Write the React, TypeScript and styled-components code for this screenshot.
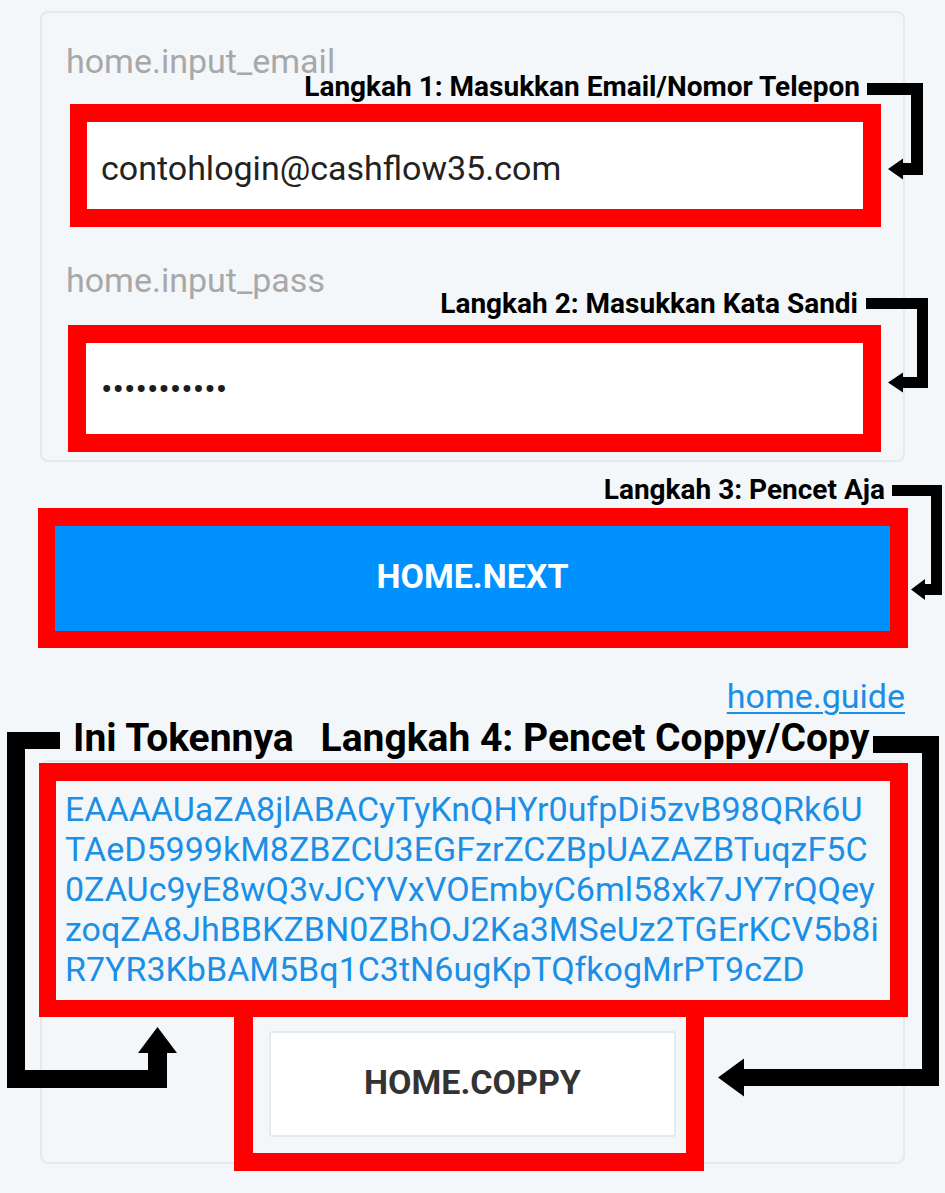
import React from "react";
import styled, { createGlobalStyle } from "styled-components";

const Global = createGlobalStyle`
  html, body { margin: 0; padding: 0; background: #f4f7fa; }
  body { font-family: Roboto, "Liberation Sans", sans-serif; }
  * { box-sizing: border-box; }
`;

const Page = styled.div`
  width: 945px;
  padding: 11px 40px 29px;
  display: flex;
  flex-direction: column;
`;

const Card = styled.section`
  border: 2px solid #e5e8ec;
  border-radius: 8px;
  background: transparent;
  display: flex;
  flex-direction: column;
`;

const FormCard = styled(Card)`
  padding: 28px 24px 8px;
`;

const FieldLabel = styled.div<{ $gapTop?: number }>`
  font-size: 34px;
  line-height: 40px;
  color: #a8a8a8;
  margin-top: ${(p) => p.$gapTop ?? 0}px;
`;

/* red annotation frame drawn around a control */
const RedFrame = styled.div<{ $m: string; $bw: string }>`
  position: relative;
  margin: ${(p) => p.$m};
  border-style: solid;
  border-color: #ff0000;
  border-width: ${(p) => p.$bw};
  display: flex;
  flex-direction: column;
`;

const InputBox = styled.div<{ $h: number; $pl: number; $pt?: number }>`
  height: ${(p) => p.$h}px;
  background: #ffffff;
  padding: ${(p) => p.$pt ?? 0}px 0 0 ${(p) => p.$pl}px;
  display: flex;
  align-items: center;
  font-size: 34px;
  color: #222222;
`;

const Dots = styled.span`
  font-size: 34px;
  color: #1d1d1d;
`;

/* callout = step text + bent arrow, laid over the form */
const Callout = styled.div<{ $top: number; $right: number }>`
  position: absolute;
  top: ${(p) => p.$top}px;
  right: ${(p) => p.$right}px;
  display: flex;
  align-items: flex-start;
  z-index: 2;
`;

const StepNote = styled.div<{ $size: number; $lh: number; $ml?: number }>`
  font-size: ${(p) => p.$size}px;
  line-height: ${(p) => p.$lh}px;
  font-weight: 700;
  color: #000000;
  white-space: nowrap;
  margin-left: ${(p) => p.$ml ?? 0}px;
`;

const ArrowSvg = styled.svg<{ $mt: number; $ml: number }>`
  display: block;
  flex: none;
  position: relative;
  z-index: 2;
  overflow: visible;
  margin-top: ${(p) => p.$mt}px;
  margin-left: ${(p) => p.$ml}px;
`;

const NextButton = styled.button`
  height: 105px;
  border: none;
  padding: 0 0 5px;
  background: #0091ff;
  color: #ffffff;
  font-family: Roboto, "Liberation Sans", sans-serif;
  font-size: 34px;
  font-weight: 700;
  text-transform: uppercase;
`;

const GuideRow = styled.div`
  margin-top: 28px;
  display: flex;
  justify-content: flex-end;
`;

const GuideLink = styled.a`
  font-size: 34px;
  line-height: 40px;
  color: #1b8fe6;
  text-decoration: underline;
  text-underline-offset: 4px;
  text-decoration-thickness: 2px;
`;

const NoteRow = styled.div`
  display: flex;
  align-items: flex-start;
  margin-left: -33px;
`;

const TokenCard = styled(Card)`
  padding: 0;
`;

const TokenText = styled.div`
  padding: 8px 0 11px 9px;
  font-size: 34px;
  line-height: 40px;
  color: #1b8fe6;
`;

const TokenLine = styled.div`
  white-space: nowrap;
`;

const CopyFrame = styled(RedFrame)`
  align-self: flex-start;
  padding: 14px 10px 16px 16px;
`;

const CopyButton = styled.button`
  width: 407px;
  height: 106px;
  padding: 0 0 4px;
  background: #ffffff;
  border: 2px solid #e6e9ed;
  border-radius: 3px;
  color: #333333;
  font-family: Roboto, "Liberation Sans", sans-serif;
  font-size: 34px;
  font-weight: 700;
  text-transform: uppercase;
`;

type ArrowProps = {
  W: number;
  H: number;
  t: number;
  hx: number;
  hl: number;
  hw: number;
  mt: number;
  ml: number;
};

/* top bar going right, dropping down, and coming back left as an arrow */
const BentArrow: React.FC<ArrowProps> = ({ W, H, t, hx, hl, hw, mt, ml }) => {
  const cy = H - t / 2;
  const pts = [
    [0, 0],
    [W, 0],
    [W, H],
    [hx, H],
    [hx, cy + hw / 2],
    [hx - hl, cy],
    [hx, cy - hw / 2],
    [hx, H - t],
    [W - t, H - t],
    [W - t, t],
    [0, t],
  ]
    .map((p) => p.join(","))
    .join(" ");
  return (
    <ArrowSvg $mt={mt} $ml={ml} width={W} height={t} viewBox={`0 0 ${W} ${t}`}>
      <polygon points={pts} fill="#000" />
    </ArrowSvg>
  );
};

/* top bar, drop down on the left, run right and point up */
const LeftBracket: React.FC<{ mt: number }> = ({ mt }) => (
  <ArrowSvg $mt={mt} $ml={0} width={53} height={17} viewBox="0 0 53 17">
    <polygon
      points="0,0 53,0 53,17 18,17 18,338 141,338 141,321 131,321 150.5,295 170,321 160,321 160,356 0,356"
      fill="#000"
    />
  </ArrowSvg>
);

const tokenLines = [
  "EAAAAUaZA8jlABACyTyKnQHYr0ufpDi5zvB98QRk6U",
  "TAeD5999kM8ZBZCU3EGFzrZCZBpUAZAZBTuqzF5C",
  "0ZAUc9yE8wQ3vJCYVxVOEmbyC6ml58xk7JY7rQQey",
  "zoqZA8JhBBKZBN0ZBhOJ2Ka3MSeUz2TGErKCV5b8i",
  "R7YR3KbBAM5Bq1C3tN6ugKpTQfkogMrPT9cZD",
];

export default function App() {
  return (
    <>
      <Global />
      <Page>
        <FormCard>
          <FieldLabel>home.input_email</FieldLabel>
          <RedFrame $m="23px -2px 0 4px" $bw="18px 18px 18px 17px">
            <InputBox $h={87} $pl={14} $pt={5}>
              contohlogin@cashflow35.com
            </InputBox>
            <Callout $top={-52} $right={-60}>
              <StepNote $size={28} $lh={33}>
                Langkah 1: Masukkan Email/Nomor Telepon
              </StepNote>
              <BentArrow W={56} H={92} t={12} hx={36} hl={15} hw={21} mt={13} ml={7} />
            </Callout>
          </RedFrame>

          <FieldLabel $gapTop={33}>home.input_pass</FieldLabel>
          <RedFrame $m="25px -2px 0 2px" $bw="18px">
            <InputBox $h={91} $pl={15}>
              <Dots>•••••••••••</Dots>
            </InputBox>
            <Callout $top={-56} $right={-65}>
              <StepNote $size={28} $lh={33}>
                Langkah 2: Masukkan Kata Sandi
              </StepNote>
              <BentArrow W={62} H={90} t={11} hx={37} hl={15} hw={20} mt={11} ml={8} />
            </Callout>
          </RedFrame>
        </FormCard>

        <RedFrame $m="46px -3px 0 -2px" $bw="18px 18px 17px 17px">
          <NextButton>home.next</NextButton>
          <Callout $top={-53} $right={-52}>
            <StepNote $size={28} $lh={33}>
              Langkah 3: Pencet Aja
            </StepNote>
            <BentArrow W={50} H={110} t={11} hx={33} hl={14} hw={21} mt={12} ml={7} />
          </Callout>
        </RedFrame>

        <GuideRow>
          <GuideLink>home.guide</GuideLink>
        </GuideRow>

        <NoteRow>
          <LeftBracket mt={16} />
          <StepNote $size={39} $lh={44} $ml={13}>
            Ini Tokennya
          </StepNote>
          <StepNote $size={39} $lh={44} $ml={27}>
            Langkah 4: Pencet Coppy/Copy
          </StepNote>
          <BentArrow W={66} H={350} t={17} hx={-129} hl={26} hw={38} mt={20} ml={4} />
        </NoteRow>

        <TokenCard>
          <RedFrame $m="1px -5px 0 -3px" $bw="18px 18px 17px 17px">
            <TokenText>
              {tokenLines.map((l) => (
                <TokenLine key={l}>{l}</TokenLine>
              ))}
            </TokenText>
          </RedFrame>
          <CopyFrame $m="0 0 -9px 192px" $bw="0 18px 18px 19px">
            <CopyButton>home.coppy</CopyButton>
          </CopyFrame>
        </TokenCard>
      </Page>
    </>
  );
}
